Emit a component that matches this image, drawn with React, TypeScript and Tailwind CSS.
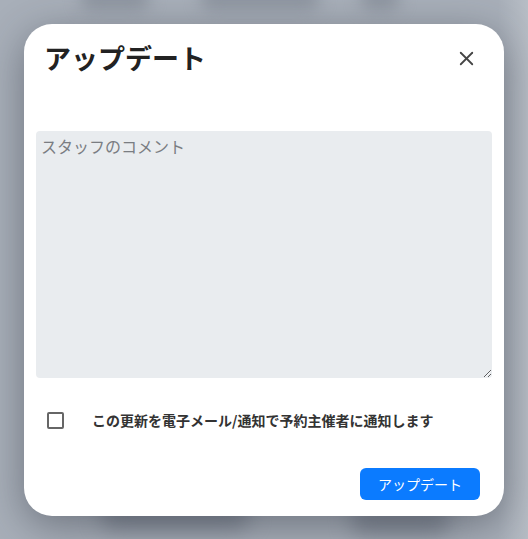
import React, { useState } from 'react';
import { X } from 'lucide-react';

const font = { fontFamily: '"Noto Sans CJK JP", "Noto Sans", sans-serif' };

const Backdrop: React.FC = () => (
  <div className="absolute inset-0 overflow-hidden bg-[#a8afb9]">
    <div className="absolute left-[80px] -top-[14px] h-[24px] w-[70px] rounded-full bg-[#8e95a0] blur-[8px]" />
    <div className="absolute left-[200px] -top-[14px] h-[24px] w-[120px] rounded-full bg-[#8e95a0] blur-[8px]" />
    <div className="absolute left-[360px] -top-[14px] h-[24px] w-[40px] rounded-full bg-[#8e95a0] blur-[8px]" />
    <div className="absolute left-[100px] top-[500px] h-[30px] w-[150px] rounded-full bg-[#838a96] blur-[10px]" />
    <div className="absolute left-[350px] top-[505px] h-[30px] w-[100px] rounded-full bg-[#838a96] blur-[10px]" />
    <div className="absolute right-0 top-0 h-full w-[30px] bg-gradient-to-l from-[#b7bdc5] to-transparent" />
  </div>
);

export default function App() {
  const [notify, setNotify] = useState(false);
  const [comment, setComment] = useState('');

  return (
    <div className="relative w-[528px] h-[539px] overflow-hidden" style={font}>
      <Backdrop />
      <div className="relative pl-[24px] pt-[24px]">
        <div className="w-[480px] h-[492px] bg-white rounded-[28px] shadow-[0_10px_40px_rgba(40,45,55,0.45)] flex flex-col px-[12px] pt-[16px] pb-[16px]">
          <div className="flex items-center justify-between pl-[8px] pr-[14px] h-[36px]">
            <h2 className="text-[27px] leading-[36px] font-bold text-[#222]">アップデート</h2>
            <button className="text-[#444] flex items-center justify-center">
              <X className="w-[23px] h-[23px]" strokeWidth={1.9} />
            </button>
          </div>

          <textarea
            value={comment}
            onChange={(e) => setComment(e.target.value)}
            placeholder="スタッフのコメント"
            className="mt-[55px] h-[247px] w-full resize-y rounded-[4px] bg-[#e9ecef] px-[5px] py-[4px] text-[16px] leading-[22px] text-[#333] placeholder:text-[#7a7d82] outline-none"
          />

          <label className="mt-[34px] flex items-center h-[16px] cursor-pointer">
            <span className="ml-[11px] w-[17px] h-[17px] rounded-[2px] border-2 border-[#666] flex items-center justify-center">
              {notify && <span className="w-[9px] h-[9px] bg-[#0b7bff]" />}
            </span>
            <input type="checkbox" className="hidden" checked={notify} onChange={(e) => setNotify(e.target.checked)} />
            <span className="ml-[28px] text-[14px] font-bold text-[#333]">この更新を電子メール/通知で予約主催者に通知します</span>
          </label>

          <div className="mt-auto flex justify-end pr-[12px]">
            <button className="w-[120px] h-[32px] rounded-[6px] bg-[#0b7bff] text-white text-[14px]">アップデート</button>
          </div>
        </div>
      </div>
    </div>
  );
}
